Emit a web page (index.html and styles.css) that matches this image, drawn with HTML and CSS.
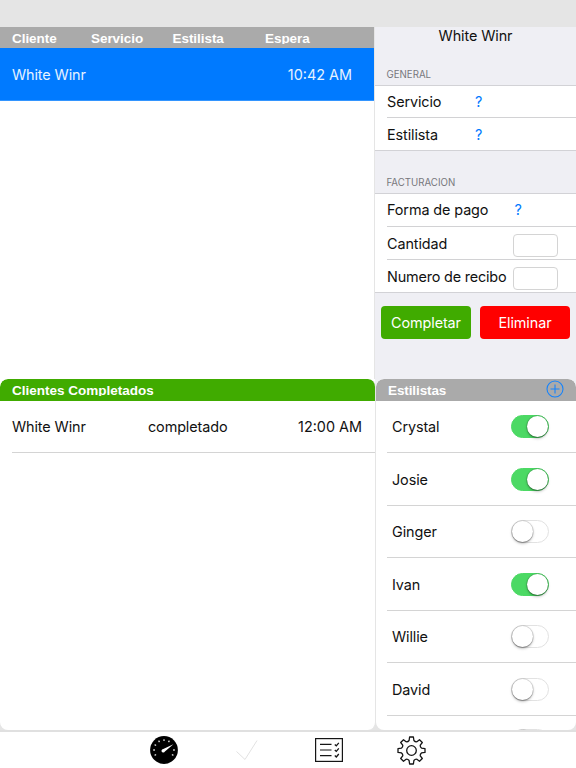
FILE: index.html
```html
<!DOCTYPE html>
<html lang="es">
<head>
<meta charset="utf-8">
<title>Clientes</title>
<link rel="stylesheet" href="styles.css">
</head>
<body>
<div class="app">
  <div class="status-bar"></div>
  <main class="panes">
    <div class="column column-left">
      <section class="waiting">
        <header class="section-head waiting-head"><span>Cliente</span><span>Servicio</span><span>Estilista</span><span class="trim">Espera</span></header>
        <div class="client-row selected"><span class="client">White Winr</span><span class="time">10:42 AM</span></div>
      </section>
      <section class="completed">
        <header class="section-head rounded green"><span class="trim">Clientes Completados</span></header>
        <div class="done-row"><span class="client">White Winr</span><span class="state">completado</span><span class="time">12:00 AM</span></div>
      </section>
    </div>
    <div class="column column-right">
      <section class="details">
        <h1 class="detail-title"><span>White Winr</span></h1>
        <h2 class="group-title general"><span>GENERAL</span></h2>
        <div class="group">
          <div class="field"><span class="label servicio">Servicio</span><a class="unknown short">?</a></div>
          <div class="field"><span class="label estilista">Estilista</span><a class="unknown short">?</a></div>
        </div>
        <h2 class="group-title billing"><span>FACTURACION</span></h2>
        <div class="group billing-group">
          <div class="field"><span class="label">Forma de pago</span><a class="unknown long">?</a></div>
          <div class="field"><span class="label">Cantidad</span><input class="entry" type="text" aria-label="Cantidad"></div>
          <div class="field"><span class="label tight">Numero de recibo</span><input class="entry" type="text" aria-label="Numero de recibo"></div>
        </div>
        <div class="actions"><button class="btn complete">Completar</button><button class="btn remove">Eliminar</button></div>
      </section>
      <section class="stylists">
        <header class="section-head rounded gray"><span>Estilistas</span>
          <svg class="add" viewBox="0 0 18 18"><circle cx="9" cy="9" r="8"/><path d="M9 4.5v9M4.5 9h9"/></svg>
        </header>
        <div class="stylist-list">
          <div class="stylist"><span>Crystal</span><i class="switch on"></i></div>
          <div class="stylist"><span>Josie</span><i class="switch on"></i></div>
          <div class="stylist"><span>Ginger</span><i class="switch"></i></div>
          <div class="stylist"><span>Ivan</span><i class="switch on"></i></div>
          <div class="stylist"><span>Willie</span><i class="switch"></i></div>
          <div class="stylist"><span>David</span><i class="switch"></i></div>
          <div class="stylist"><span></span><i class="switch"></i></div>
        </div>
      </section>
    </div>
  </main>
  <nav class="tab-bar">
    <svg class="tab gauge" viewBox="-14 -14 28 28">
      <circle r="13.9"/>
      <path class="ticks" d="M-10.8 0h1.7M9.1 0h1.7M-9.4-5.4l1.5.9M-5.4-9.4l.9 1.5M0-10.8v1.7M5.4-9.4l-.9 1.5M-9.4 5.4l1.5-.9M9.4 5.4l-1.5-.9"/>
      <path class="needle" d="M9.4-5.8L.9 1.5A1.8 1.8 0 1 1-.7-1.1Z"/>
    </svg>
    <svg class="tab check" viewBox="0 0 24 24"><path d="M1.5 12.5l8.5 8L22 1.5"/></svg>
    <svg class="tab list" viewBox="0 0 28 24">
      <rect x=".6" y=".6" width="26.8" height="22.8"/>
      <path d="M5 6.4h11.5M5 12h11.5M5 17.6h11.5"/>
      <path class="marks" d="M19.8 6.4l1.5 1.4 2.5-3M19.8 12l1.5 1.4 2.5-3M19.8 17.6l1.5 1.4 2.5-3"/>
    </svg>
    <svg class="tab gear" viewBox="-14.5 -14.5 29 29">
      <path d="M-1.9-13.5H1.9L2.4-10Q3.8-8.4 5.4-8.8L8-10.8L10.8-8L8.8-5.4Q8.4-3.8 10-2.4L13.5-1.9V1.9L10 2.4Q8.4 3.8 8.8 5.4L10.8 8L8 10.8L5.4 8.8Q3.8 8.4 2.4 10L1.9 13.5H-1.9L-2.4 10Q-3.8 8.4-5.4 8.8L-8 10.8L-10.8 8L-8.8 5.4Q-8.4 3.8-10 2.4L-13.5 1.9V-1.9L-10-2.4Q-8.4-3.8-8.8-5.4L-10.8-8L-8-10.8L-5.4-8.8Q-3.8-8.4-2.4-10Z"/>
      <circle r="4.8"/>
    </svg>
  </nav>
</div>
</body>
</html>
```
FILE: styles.css
```css
* { box-sizing: border-box; }
body { margin: 0; font-family: Inter, "Liberation Sans", sans-serif; font-size: 14.4px; letter-spacing: -0.1px; color: #111; }
.app { width: 576px; height: 768px; display: grid; grid-template-rows: 27px 703px 38px; overflow: hidden; background: #fff; }
.status-bar { background: #e5e5e5; }
.panes { display: grid; grid-template-columns: 375px 201px; background: #e5e5e5; min-height: 0; }
.column { display: grid; grid-template-rows: 352px 351px; min-width: 0; min-height: 0; }
.column-left { background: linear-gradient(#fff 690px, #e5e5e5 690px); }
.section-head { height: 21px; background: #aaa; color: #fff; font: bold 13.5px/17px "Liberation Sans", sans-serif; letter-spacing: 0; display: flex; align-items: flex-start; padding-top: 3px; }
.section-head .trim { clip-path: inset(0 0 3px 0); }
.waiting-head { padding-left: 12px; display: grid; grid-template-columns: 79px 81.5px 92.5px 1fr; letter-spacing: -0.05px; }
.client-row { height: 53px; display: flex; align-items: center; justify-content: space-between; padding: 0 22px 0 12px; background: #007aff; color: #e6f2ff; border-bottom: 1px solid #3395ff; }
.section-head.rounded { height: 22px; border-radius: 8px 8px 0 0; }
.green { background: #40ab00; padding-left: 12px; margin-right: -1px; }
.completed, .stylists { background: #fff; border-radius: 8px; min-height: 0; overflow: hidden; }
.completed { margin-right: -1px; border-right: 1px solid #e5e5e5; z-index: 1; }
.waiting { border-right: 1px solid #e5e5e5; }
.done-row { height: 52px; margin-left: 12px; border-bottom: 1px solid #d4d4d4; display: grid; grid-template-columns: 136px 1fr auto; align-items: center; padding-right: 13px; }
.time { letter-spacing: 0; }
.column-right { background: linear-gradient(#efeff4 690px, #e5e5e5 690px); }
.details { display: flex; flex-direction: column; }
.detail-title { margin: 0; font-weight: 400; font-size: 14.4px; line-height: 17px; text-align: center; }
.group-title { margin: 0; padding-left: 11.5px; color: #77777c; font-weight: 400; font-size: 9.7px; line-height: 12px; letter-spacing: 0; }
.general { height: 41px; padding-top: 25px; }
.billing { height: 42px; padding-top: 26px; }
.group { background: #fff; border-top: 1px solid #d2d2d6; border-bottom: 1px solid #d2d2d6; padding-left: 12px; }
.field { display: flex; align-items: center; height: 33px; border-top: 1px solid #d2d2d4; }
.field:first-child { border-top: 0; height: 31px; }
.billing-group .field:first-child { height: 32px; }
.label { white-space: nowrap; }
.billing-group .field:first-child .label, .billing-group .unknown { margin-top: -1px; }
.label.tight { letter-spacing: -0.17px; }
.unknown { color: #007aff; }
.servicio, .estilista { width: 88px; }
.unknown.long { margin-left: 26px; }
.entry { width: 45px; height: 23px; margin: 5px 18px 0 auto; flex: none; border: 1px solid #d4d4d4; border-radius: 4px; background: #fff; padding: 0 4px; }
.actions { display: flex; gap: 9px; padding: 13px 6px 0; }
.btn { width: 90px; height: 33px; border: 0; border-radius: 4px; padding: 0; color: #fff; font: 14.4px Inter, sans-serif; letter-spacing: -0.1px; }
.complete { background: #40ab00; }
.remove { background: #f00; }
.stylists { margin-left: 1px; }
.gray { background: #aaa; padding-left: 12px; padding-right: 12px; justify-content: space-between; letter-spacing: -0.1px; }
.add { width: 18px; height: 18px; margin-top: -2px; fill: none; stroke: #1683fb; stroke-width: 1.1; }
.stylist-list { padding-left: 11px; }
.stylist { height: 52.5px; border-bottom: 1px solid #d4d4d4; padding: 0 27px 0 5px; display: flex; align-items: center; justify-content: space-between; }
.stylist:first-child { height: 52px; }
.stylist span { padding-top: 0.6px; }
.switch { display: flex; width: 38px; height: 23px; margin-top: 0.5px; border-radius: 12px; border: 1px solid #e2e2e2; background: #fff; }
.switch::before { content: ""; width: 21px; height: 21px; border-radius: 50%; background: #fff; box-shadow: 0 1.5px 3px #0004, 0 0 0 .7px #0002, 0 1px 1px #0003; }
.switch.on { background: #4cd964; border-color: #4cd964; justify-content: flex-end; }
.stylist:last-child .switch { margin-top: -2px; }
.tab-bar { border-top: 2px solid #e0e0e0; background: #fff; display: flex; align-items: flex-start; padding: 4px 0 0 150px; }
.tab { flex: none; fill: none; stroke: #151515; }
.gauge { width: 28px; height: 28px; fill: #000; stroke: none; }
.ticks { stroke: #ddd; stroke-width: 1.3; }
.needle { fill: #fff; }
.check { width: 24px; height: 24px; margin: 3px 0 0 57px; stroke: #e2e2e2; }
.list { width: 28px; height: 24px; margin: 2px 0 0 56px; stroke-width: 1.2; }
.marks { stroke-width: 1.3; }
.gear { width: 29px; height: 29px; margin: -0.5px 0 0 54px; stroke-width: 1.3; stroke-linejoin: round; }
```
